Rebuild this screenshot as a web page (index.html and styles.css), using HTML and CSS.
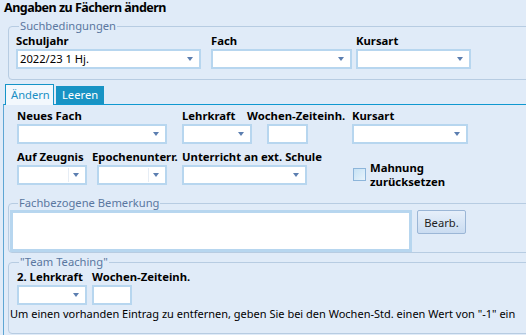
FILE: index.html
```html
<!DOCTYPE html>
<html lang="de">
<head>
<meta charset="utf-8">
<title>Angaben zu Fächern ändern</title>
<link rel="stylesheet" href="styles.css">
</head>
<body>
<div class="title">Angaben zu Fächern ändern</div>

<fieldset class="group search">
  <legend>Suchbedingungen</legend>
  <div class="row">
    <div class="field w-schuljahr">
      <div class="lbl">Schuljahr</div>
      <div class="combo" style="width:185px"><span class="val">2022/23 1 Hj.</span><span class="arrow"></span></div>
    </div>
    <div class="field w-fach">
      <div class="lbl">Fach</div>
      <div class="combo" style="width:141px"><span class="arrow"></span></div>
    </div>
    <div class="field">
      <div class="lbl">Kursart</div>
      <div class="combo" style="width:115px"><span class="arrow"></span></div>
    </div>
  </div>
</fieldset>

<div class="tabs-wrap">
  <div class="tabs">
    <div class="tab active">Ändern</div>
    <div class="tab">Leeren</div>
  </div>
  <div class="panel">
    <div class="row r1">
      <div class="field c-neues">
        <div class="lbl">Neues Fach</div>
        <div class="combo" style="width:150px"><span class="arrow"></span></div>
      </div>
      <div class="field c-lehr">
        <div class="lbl">Lehrkraft</div>
        <div class="combo" style="width:70px"><span class="arrow"></span></div>
      </div>
      <div class="field c-woch">
        <div class="lbl">Wochen-Zeiteinh.</div>
        <div class="text in-woch" style="width:41px"></div>
      </div>
      <div class="field">
        <div class="lbl">Kursart</div>
        <div class="combo" style="width:116px"><span class="arrow"></span></div>
      </div>
    </div>
    <div class="row r2">
      <div class="field c-zeug">
        <div class="lbl">Auf Zeugnis</div>
        <div class="combo split" style="width:70px"><span class="arrow"></span></div>
      </div>
      <div class="field c-epo">
        <div class="lbl">Epochenunterr.</div>
        <div class="combo split in-epo" style="width:70px"><span class="arrow"></span></div>
      </div>
      <div class="field c-ext">
        <div class="lbl">Unterricht an ext. Schule</div>
        <div class="combo" style="width:125px"><span class="arrow"></span></div>
      </div>
      <label class="check">
        <span class="box"></span>
        <span class="check-lbl">Mahnung<br>zurücksetzen</span>
      </label>
    </div>

    <fieldset class="group remark">
      <legend>Fachbezogene Bemerkung</legend>
      <div class="remark-row">
        <div class="textarea"></div>
        <button class="btn">Bearb.</button>
      </div>
    </fieldset>

    <fieldset class="group team">
      <legend>"Team Teaching"</legend>
      <div class="row tt">
        <div class="field c-zeug">
          <div class="lbl">2. Lehrkraft</div>
          <div class="combo" style="width:70px"><span class="arrow"></span></div>
        </div>
        <div class="field">
          <div class="lbl">Wochen-Zeiteinh.</div>
          <div class="text" style="width:40px"></div>
        </div>
      </div>
      <div class="hint">Um einen vorhanden Eintrag zu entfernen, geben Sie bei den Wochen-Std. einen Wert von "-1" ein</div>
    </fieldset>
  </div>
</div>
</body>
</html>
```

FILE: styles.css
```css
html, body {
  margin: 0;
  padding: 0;
}
body {
  width: 526px;
  height: 335px;
  overflow: hidden;
  background: #e0ebf8;
  font-family: "Noto Sans", "Open Sans", sans-serif;
  font-size: 11.2px;
  color: #000;
}
.title {
  font-weight: bold;
  font-size: 12.5px;
  letter-spacing: -0.5px;
  line-height: 16px;
  padding-left: 4px;
}

/* group boxes */
.group {
  margin: 0;
  border: 1px solid #b7cce2;
  border-radius: 4px;
  min-width: 0;
}
.group legend {
  color: #5a77a0;
  line-height: 14px;
  padding: 0 1px;
}
.search {
  margin: 3px 0 0 8px;
  width: 600px;
  padding: 1px 0 10px 7px;
}
.search legend {
  margin-left: 3px;
}

.row {
  display: flex;
  align-items: flex-start;
}
.field {
  display: flex;
  flex-direction: column;
  flex: none;
}
.lbl {
  font-weight: bold;
  font-size: 11.3px;
  line-height: 14px;
  white-space: nowrap;
}
.combo, .text {
  box-sizing: border-box;
  height: 20px;
  margin-top: 1px;
  border: 2px solid #b7d6ef;
  background: #fff;
  position: relative;
  display: flex;
  align-items: center;
}
.combo .val {
  padding-left: 2px;
  line-height: 14px;
}
.arrow {
  position: absolute;
  right: 6px;
  top: 6px;
  width: 0;
  height: 0;
  border-left: 3.5px solid transparent;
  border-right: 3.5px solid transparent;
  border-top: 4px solid #5b7eb0;
}
.split::after {
  content: "";
  position: absolute;
  right: 16px;
  top: 1px;
  bottom: 1px;
  width: 1px;
  background: #e6edf5;
}
.w-schuljahr { width: 195px; }
.w-fach { width: 145px; }

/* tabs */
.tabs-wrap {
  margin: 4px 0 0 3px;
}
.tabs {
  display: flex;
  align-items: flex-end;
  height: 20px;
  padding-left: 2px;
}
.tab {
  box-sizing: border-box;
  height: 18px;
  padding: 0 6px;
  line-height: 17px;
  background: #1893c4;
  color: #fff;
  margin-left: 2px;
}
.tab.active {
  margin-left: 0;
  height: 21px;
  margin-bottom: -1px;
  position: relative;
  background: #f3f8fd;
  color: #1a8fc4;
  border: 1px solid #1594c8;
  border-bottom: none;
  line-height: 19px;
  padding: 0 5px;
  width: 49px;
}
.panel {
  border-top: 1px solid #0f98d0;
  border-left: 1px solid #5ea6d4;
  height: 240px;
}
.r1 {
  padding: 4px 0 0 13px;
}
.r2 {
  padding: 6px 0 0 13px;
}
.c-neues { width: 165px; }
.c-lehr { width: 65px; }
.c-woch { width: 105px; }
.in-woch { margin-left: 20px; }
.c-zeug { width: 75px; }
.c-epo { width: 90px; }
.in-epo { margin-left: 5px; }
.c-ext { width: 171px; }

.check {
  display: flex;
  align-items: center;
  margin-top: 11px;
}
.box {
  box-sizing: border-box;
  width: 13px;
  height: 13px;
  border: 1px solid #8db5da;
  background: linear-gradient(135deg, #c6e2f5, #e8f3fb);
}
.check-lbl {
  font-weight: bold;
  font-size: 11.3px;
  line-height: 13.5px;
  margin-left: 4px;
}

/* remark */
.remark {
  margin: 8px 0 0 4px;
  width: 600px;
  padding: 0 0 0 1px;
}
.remark legend {
  margin-left: 8px;
}
.remark-row {
  display: flex;
  align-items: flex-start;
}
.textarea {
  box-sizing: border-box;
  width: 402px;
  height: 42px;
  border: 3px solid #b7d6ef;
  background: #fff;
}
.btn {
  box-sizing: border-box;
  margin-left: 5px;
  width: 49px;
  height: 24px;
  border: 1px solid #9bb6d6;
  border-radius: 2px;
  background: linear-gradient(#e6effa, #cadcf1);
  font-family: inherit;
  font-size: 11.2px;
  color: #1e1e1e;
  padding: 0;
}

/* team teaching */
.team {
  margin: 2px 0 0 4px;
  width: 600px;
  padding: 1px 0 12px 1px;
}
.team legend {
  margin-left: 9px;
}
.tt {
  padding-left: 7px;
}
.hint {
  font-size: 11px;
  line-height: 14px;
  margin-top: 2px;
  white-space: nowrap;
}
```
